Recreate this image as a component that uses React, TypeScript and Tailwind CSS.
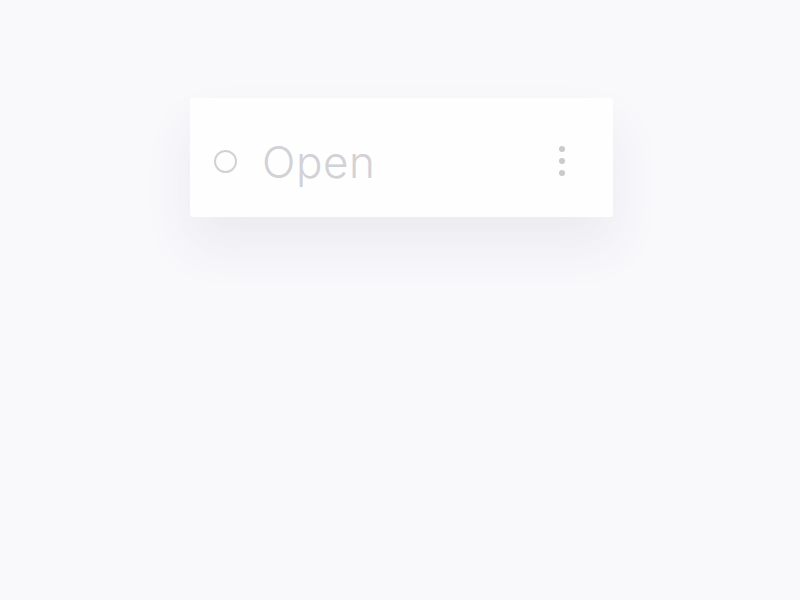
export default function App() {
  return (
    <main className="min-h-screen bg-[#f9f9fc] pt-[98px] pl-[190px]">
      {/* Status card */}
      <div className="flex h-[119px] w-[423px] items-center rounded-[2px] bg-[#fefeff] pt-[8px] pl-[24px] pr-[48px] shadow-[0_28px_50px_0_rgba(70,70,100,0.08)]">
        <span className="h-[23px] w-[23px] shrink-0 rounded-full border-[2px] border-[#d2d2d5]"></span>
        <span
          className="ml-[25px] text-[44px] font-light leading-none tracking-[0.5px] text-[#d2d2d6]"
          style={{ fontFamily: "Inter, 'Liberation Sans', sans-serif" }}
        >
          Open
        </span>
        <div className="ml-auto flex flex-col items-center gap-[6px] pb-[2px]">
          <span className="h-[6px] w-[6px] rounded-full bg-[#cacacd]"></span>
          <span className="h-[6px] w-[6px] rounded-full bg-[#cacacd]"></span>
          <span className="h-[6px] w-[6px] rounded-full bg-[#cacacd]"></span>
        </div>
      </div>
    </main>
  );
}
